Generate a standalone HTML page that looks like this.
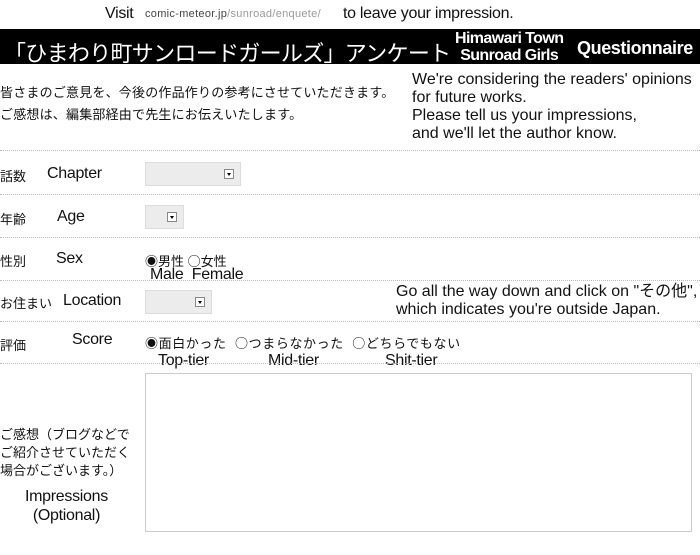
<!DOCTYPE html>
<html><head><meta charset="utf-8"><style>
body{margin:0;width:700px;height:555px;background:#fff;position:relative;overflow:hidden;font-family:"Liberation Sans","Noto Sans CJK JP",sans-serif;color:#111}
.a{position:absolute;white-space:nowrap}
.j{font-size:13px}
.e{font-size:16px;letter-spacing:-0.3px}
.hr{position:absolute;left:0;width:700px;border-top:1px dotted #bbb;height:0}
.sel{position:absolute;background:#ececec;border:1px solid #ddd;box-sizing:border-box}
.sel i{position:absolute;right:6px;top:6px;width:10px;height:10px;border:1px solid #888;background:#fff;box-sizing:border-box}
.sel i:after{content:"";position:absolute;left:2px;top:3px;border-left:2px solid transparent;border-right:2px solid transparent;border-top:3px solid #000}
.r{font-family:"Noto Sans CJK JP",sans-serif}
</style></head><body>
<div class="a e" style="left:105px;top:5px">Visit</div>
<div class="a" style="left:145px;top:8px;font-size:11px;color:#444;letter-spacing:0.3px">comic-meteor.jp<span style="color:#999">/sunroad/enquete/</span></div>
<div class="a e" style="left:343px;top:5px">to leave your impression.</div>
<div class="a" style="left:0;top:29px;width:700px;height:35px;background:#000"></div>
<div class="a" style="left:4px;top:36px;font-size:22px;color:#fff;letter-spacing:-0.7px">「ひまわり町サンロードガールズ」アンケート</div>
<div class="a" style="left:455px;top:30px;font-size:16px;color:#fff;font-weight:bold;line-height:17px;text-align:center;letter-spacing:-0.6px">Himawari Town<br>Sunroad Girls</div>
<div class="a" style="left:577px;top:38px;font-size:18px;color:#fff;font-weight:bold;letter-spacing:-0.4px">Questionnaire</div>
<div class="a j" style="left:0;top:82px;line-height:22px;letter-spacing:0.2px">皆さまのご意見を、今後の作品作りの参考にさせていただきます。<br>ご感想は、編集部経由で先生にお伝えいたします。</div>
<div class="a e" style="left:412px;top:71px;line-height:18px;letter-spacing:0">We're considering the readers' opinions<br>for future works.<br>Please tell us your impressions,<br>and we'll let the author know.</div>
<div class="hr" style="top:150px"></div>
<div class="a j" style="left:0;top:166px">話数</div><div class="a e" style="left:47px;top:165px">Chapter</div>
<div class="sel" style="left:145px;top:162px;width:96px;height:24px"><i></i></div>
<div class="hr" style="top:194px"></div>
<div class="a j" style="left:0;top:209px">年齢</div><div class="a e" style="left:57px;top:208px">Age</div>
<div class="sel" style="left:145px;top:205px;width:39px;height:24px"><i></i></div>
<div class="hr" style="top:237px"></div>
<div class="a j" style="left:0;top:251px">性別</div><div class="a e" style="left:56px;top:250px">Sex</div>
<div class="a j" style="left:145px;top:251px"><span class="r">◉</span>男性 <span class="r">○</span>女性</div>
<div class="a e" style="left:150px;top:266px">Male &nbsp;Female</div>
<div class="hr" style="top:280px"></div>
<div class="a j" style="left:0;top:293px">お住まい</div><div class="a e" style="left:63px;top:292px">Location</div>
<div class="sel" style="left:145px;top:290px;width:67px;height:24px"><i></i></div>
<div class="a e" style="left:396px;top:283px;line-height:18px;letter-spacing:0">Go all the way down and click on "その他",<br>which indicates you're outside Japan.</div>
<div class="hr" style="top:321px"></div>
<div class="a j" style="left:0;top:335px">評価</div><div class="a e" style="left:72px;top:331px">Score</div>
<div class="a j" style="left:145px;top:333px;letter-spacing:0.6px"><span class="r">◉</span>面白かった &nbsp;<span class="r">○</span>つまらなかった &nbsp;<span class="r">○</span>どちらでもない</div>
<div class="a e" style="left:158px;top:352px">Top-tier</div><div class="a e" style="left:268px;top:352px">Mid-tier</div><div class="a e" style="left:385px;top:352px">Shit-tier</div>
<div class="hr" style="top:363px"></div>
<div class="a" style="left:145px;top:373px;width:547px;height:159px;border:1px solid #ccc;box-sizing:border-box"></div>
<div class="a j" style="left:0;top:426px;line-height:18px">ご感想（ブログなどで<br>ご紹介させていただく<br>場合がございます。）</div>
<div class="a e" style="left:25px;top:487px;line-height:19px;text-align:center">Impressions<br>(Optional)</div>
</body></html>
